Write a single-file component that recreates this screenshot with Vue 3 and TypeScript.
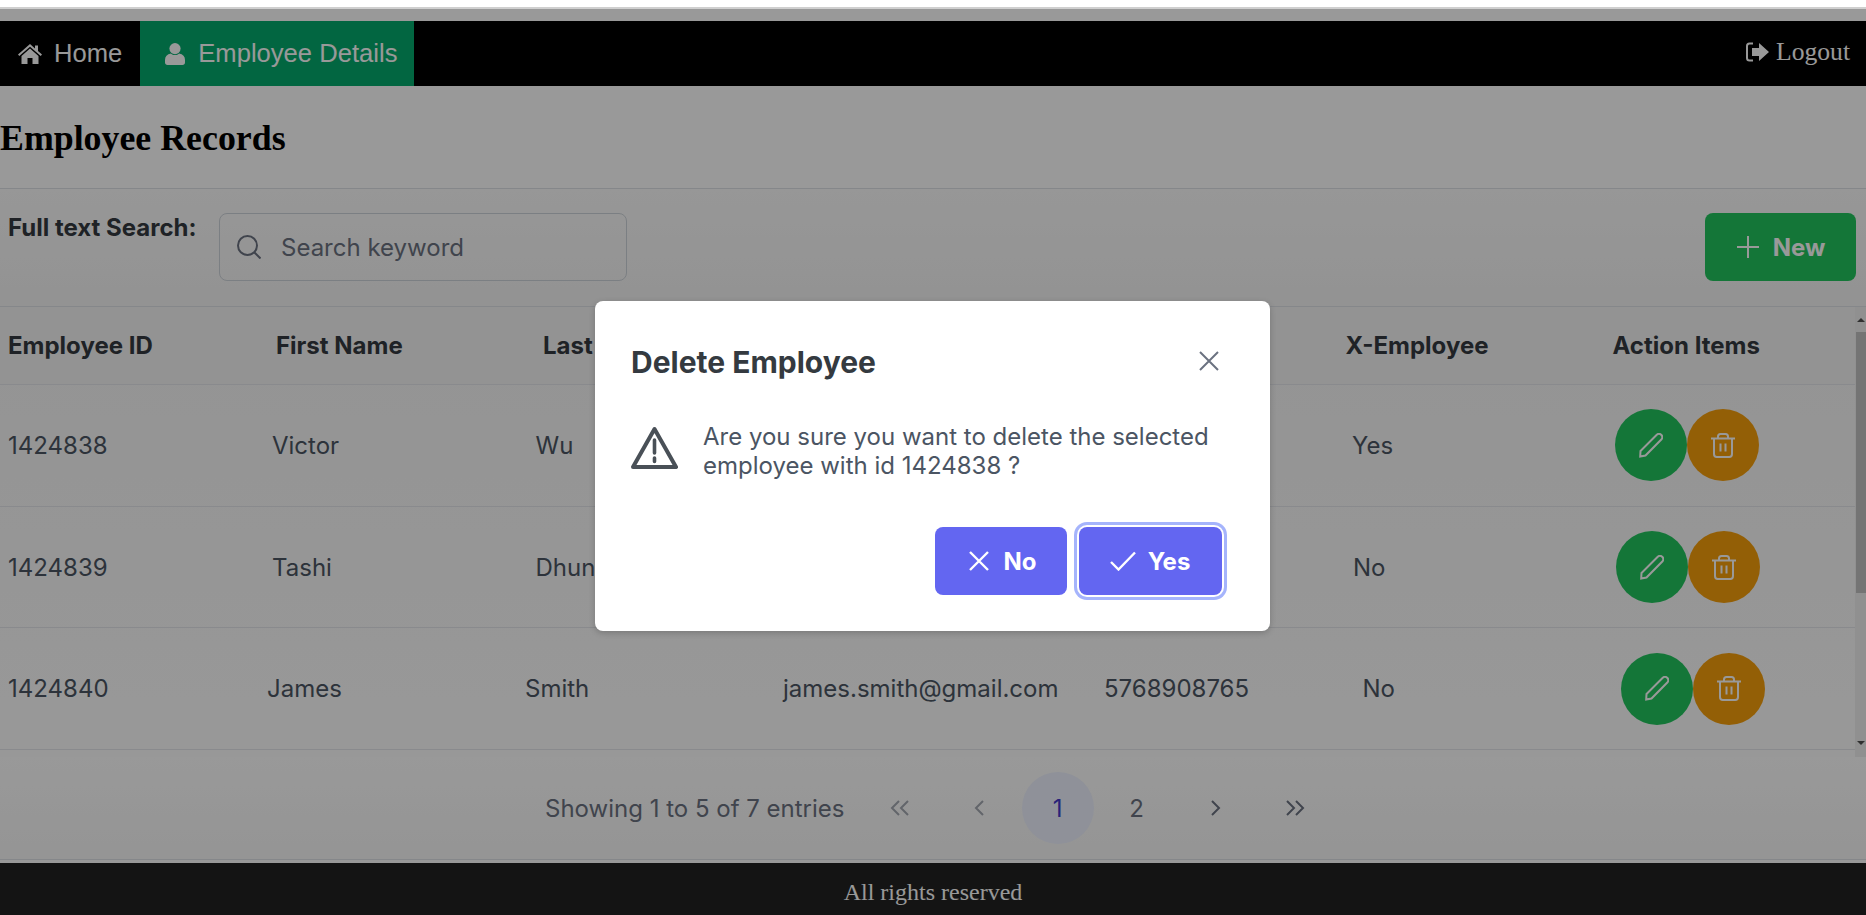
<script setup lang="ts">
interface Employee {
  id: number
  first: string
  last: string
  email: string
  phone: string
  exEmployee: string
  cols: string
}

// the rows don't share column widths in the original, each one has its own
const headerCols = '268px 267px 802.500px 267px 1fr'

const employees: Employee[] = [
  { id: 1424838, first: 'Victor', last: 'Wu', email: '', phone: '', exEmployee: 'Yes', cols: '264px 263.500px 270px 298px 248.500px 263px 1fr' },
  { id: 1424839, first: 'Tashi', last: 'Dhun', email: '', phone: '', exEmployee: 'No', cols: '264px 263.500px 270px 298px 249.500px 263px 1fr' },
  { id: 1424840, first: 'James', last: 'Smith', email: 'james.smith@gmail.com', phone: '5768908765', exEmployee: 'No', cols: '259px 258px 258px 321px 258.500px 258.500px 1fr' }
]

const pages = [1, 2]
</script>

<template>
  <div class="strip"></div>

  <nav class="topnav">
    <a class="nav-link">
      <svg class="home-icon" viewBox="0 0 24 20"><path d="M12 0 17 4.400V1.500H20V7L24 10.500 22.700 12 12 2.800 1.300 12 0 10.500Z" /><path d="M12 4.600 20.500 12V20H14.500V14H9.500V20H3.500V12Z" /></svg>
      Home
    </a>
    <a class="nav-link active">
      <svg class="user-icon" viewBox="0 0 20 22"><circle cx="10" cy="5.600" r="5.600" /><path d="M6 10.500C8 12.500 12 12.500 14 10.500 18 11.200 20 13.500 20 17V19.500C20 21 19 22 17.500 22H2.500C1 22 0 21 0 19.500V17C0 13.500 2 11.200 6 10.500Z" /></svg>
      Employee Details
    </a>
    <a class="logout">
      <svg class="logout-icon" viewBox="0 0 23 20"><path d="M7 1.500H3.500C2 1.500 1 2.500 1 4V16C1 17.500 2 18.500 3.500 18.500H7" fill="none" stroke="currentColor" stroke-width="2" /><path d="M6 6H13V1L23 10 13 19V14H6Z" /></svg>
      Logout
    </a>
  </nav>

  <h2 class="page-title">Employee Records</h2>

  <section class="toolbar">
    <label class="search-label">Full text Search:</label>
    <div class="search-box">
      <svg class="search-icon" viewBox="0 0 24 24"><circle cx="10.500" cy="10.500" r="9.500" /><path d="M17.500 17.500 23.500 23.500" /></svg>
      <span class="placeholder">Search keyword</span>
    </div>
    <button class="new-btn">
      <svg class="plus-icon" viewBox="0 0 24 24"><path d="M12 1V23M1 12H23" /></svg>
      New
    </button>
  </section>

  <section class="table-area">
    <div class="table-body">
      <div class="row head" :style="{ gridTemplateColumns: headerCols }">
        <span>Employee ID</span>
        <span>First Name</span>
        <span>Last</span>
        <span>X-Employee</span>
        <span>Action Items</span>
      </div>
      <div v-for="emp in employees" :key="emp.id" class="row" :style="{ gridTemplateColumns: emp.cols }">
        <span>{{ emp.id }}</span>
        <span>{{ emp.first }}</span>
        <span>{{ emp.last }}</span>
        <span>{{ emp.email }}</span>
        <span>{{ emp.phone }}</span>
        <span>{{ emp.exEmployee }}</span>
        <div class="actions">
          <button class="round edit">
            <svg viewBox="0 0 24 25"><path d="M1.500 18 17.500 2C19 .6 21 .6 22.400 2 23.600 3.300 23.600 5 22.300 6.500L6.500 22.500 1.200 23.500Z" /></svg>
          </button>
          <button class="round del">
            <svg viewBox="0 0 24 25"><path d="M0 5.500H24M7 5.500V3.500C7 2 8 1 9.500 1H14.500C16 1 17 2 17 3.500V5.500M3 5.500V21C3 22.800 4 24 5.800 24H18.200C20 24 21 22.800 21 21V5.500M9.500 10.500V18.500M14.500 10.500V18.500" /></svg>
          </button>
        </div>
      </div>
    </div>
    <div class="scrollbar">
      <i class="arrow up"></i>
      <div class="thumb"></div>
      <i class="arrow down"></i>
    </div>
  </section>

  <section class="pager">
    <span class="entries">Showing 1 to 5 of 7 entries</span>
    <span class="page-btn muted">
      <svg viewBox="0 0 20 16"><path d="M9 1 2 8 9 15M18 1 11 8 18 15" /></svg>
    </span>
    <span class="page-btn muted">
      <svg viewBox="0 0 20 16"><path d="M14 1 7 8 14 15" /></svg>
    </span>
    <span v-for="p in pages" :key="p" class="page-btn" :class="{ current: p === 1 }">{{ p }}</span>
    <span class="page-btn">
      <svg viewBox="0 0 20 16"><path d="M6 1 13 8 6 15" /></svg>
    </span>
    <span class="page-btn">
      <svg viewBox="0 0 20 16"><path d="M2 1 9 8 2 15M11 1 18 8 11 15" /></svg>
    </span>
  </section>

  <footer class="footer">All rights reserved</footer>

  <!-- dialog de confirmation -->
  <div class="mask">
    <div class="dialog">
      <div class="dialog-head">
        <span class="dialog-title">Delete Employee</span>
        <svg class="close-icon" viewBox="0 0 20 20"><path d="M1 1 19 19M19 1 1 19" /></svg>
      </div>
      <div class="dialog-body">
        <svg class="warn-icon" viewBox="0 0 47 43">
          <path d="M23.500 3 45 41H2Z" fill="none" stroke-width="4" stroke-linejoin="round" />
          <path d="M23.500 14V27M23.500 32V35.500" fill="none" stroke-width="3.600" stroke-linecap="round" />
        </svg>
        <p>Are you sure you want to delete the selected employee with id 1424838 ?</p>
      </div>
      <div class="dialog-foot">
        <button class="confirm">
          <svg viewBox="0 0 20 20"><path d="M1 1 19 19M19 1 1 19" /></svg>
          No
        </button>
        <button class="confirm focused">
          <svg viewBox="0 0 26 20"><path d="M1 11 8.500 18.500 25 1.500" /></svg>
          Yes
        </button>
      </div>
    </div>
  </div>
</template>

<style scoped>
.strip {
  height: 7px;
  background: #fff;
  border-bottom: 2px solid #cfcfcf;
  margin-bottom: 12px;
}

/* barre du haut */
.topnav {
  display: flex;
  align-items: stretch;
  height: 65px;
  background: #000;
  font-family: "Liberation Sans", Arial, sans-serif;
  font-size: 25.6px;
  color: #fff;
}

.nav-link {
  display: flex;
  align-items: center;
  padding: 0 18px;
}

.nav-link.active {
  background: #04aa6d;
  padding: 0 17px 0 25px;
}

.home-icon {
  width: 24px;
  height: 20px;
  margin-right: 12px;
  fill: #fff;
}

.user-icon {
  width: 20px;
  height: 22px;
  margin-right: 13px;
  fill: #fff;
}

.logout {
  margin-left: auto;
  display: flex;
  align-items: center;
  padding: 0 16px 4px 0;
  font-family: "Liberation Serif", "Times New Roman", serif;
}

.logout-icon {
  width: 23px;
  height: 20px;
  margin-right: 7px;
  fill: #fff;
}

.page-title {
  margin: 0;
  box-sizing: border-box;
  padding-top: 1px;
  height: 103px;
  display: flex;
  align-items: center;
  font-family: "Liberation Serif", "Times New Roman", serif;
  font-size: 35.840px;
  font-weight: 700;
  color: #000;
  border-bottom: 1px solid #dee2e6;
}

.toolbar,
.table-area,
.pager,
.dialog {
  font-family: Inter, "Noto Sans", sans-serif;
  font-size: 24px;
}

.toolbar {
  display: flex;
  align-items: flex-start;
  padding: 24px 10px 24px 8px;
  height: 69px;
  background: linear-gradient(#fcfcfc, #f5f5f5);
  border-bottom: 1px solid #dee2e6;
}

.search-label {
  width: 211px;
  font-weight: 700;
  color: #343a40;
  line-height: 30px;
}

.search-box {
  width: 408px;
  height: 68px;
  box-sizing: border-box;
  display: flex;
  align-items: center;
  padding-left: 17px;
  border: 1px solid #ced4da;
  border-radius: 8px;
}

.search-icon {
  width: 24px;
  height: 24px;
  margin-right: 20px;
  fill: none;
  stroke: #6b7280;
  stroke-width: 2;
}

.placeholder {
  color: #6b7280;
}

.new-btn {
  margin-left: auto;
  width: 151px;
  height: 68px;
  display: flex;
  align-items: center;
  justify-content: center;
  gap: 13px;
  border: 0;
  border-radius: 8px;
  background: #22c55e;
  color: #fff;
  font: 700 24px Inter, sans-serif;
}

.plus-icon {
  width: 24px;
  height: 24px;
  fill: none;
  stroke: #fff;
  stroke-width: 2;
}

.table-area {
  display: flex;
  height: 450px;
  overflow: hidden;
  background: linear-gradient(#f6f6f6, #fefefe);
}

.table-body {
  flex: 1;
  min-width: 0;
}

.row {
  display: grid;
  align-items: center;
  height: 121.700px;
  box-sizing: border-box;
  padding-left: 8px;
  color: #4b5563;
  border-bottom: 1px solid #e5e7eb;
  white-space: nowrap;
}

.row.head {
  height: 78px;
  font-weight: 700;
  color: #343a40;
  background: #f5f5f5;
}

.actions {
  display: flex;
}

.round {
  width: 72px;
  height: 72px;
  padding: 0;
  border: 0;
  border-radius: 50%;
  display: flex;
  align-items: center;
  justify-content: center;
}

.round svg {
  width: 24px;
  height: 25px;
  fill: none;
  stroke: #fff;
  stroke-width: 2;
}

.round.edit {
  background: #22c55e;
}

.round.del {
  background: #f59e0b;
}

.scrollbar {
  width: 11px;
  background: #f1f1f1;
  position: relative;
}

.thumb {
  position: absolute;
  top: 25px;
  left: 1px;
  right: 0;
  height: 261px;
  background: #c1c1c1;
}

.arrow {
  position: absolute;
  left: 2px;
  width: 0;
  height: 0;
  border-left: 4px solid transparent;
  border-right: 4px solid transparent;
}

.arrow.up {
  top: 11px;
  border-bottom: 4px solid #505050;
}

.arrow.down {
  bottom: 12px;
  border-top: 4px solid #505050;
}

.pager {
  height: 103px;
  box-sizing: border-box;
  display: flex;
  align-items: center;
  justify-content: center;
  padding-left: 13px;
  color: #6b7280;
  background: linear-gradient(#fff, #f8f8f8);
  border-bottom: 1px solid #dee2e6;
}

.entries {
  margin-right: 15.500px;
}

.page-btn {
  width: 72px;
  height: 72px;
  margin: 0 3.500px;
  border-radius: 50%;
  display: flex;
  align-items: center;
  justify-content: center;
  color: #6b7280;
}

.page-btn svg {
  width: 20px;
  height: 16px;
  fill: none;
  stroke: #6b7280;
  stroke-width: 2;
}

.page-btn.muted svg {
  opacity: 0.6;
}

.page-btn.current {
  background: #eef2ff;
  color: #4338ca;
}

.footer {
  height: 52px;
  box-sizing: border-box;
  padding: 6px 0 0 0;
  margin-top: 3px;
  background: #222;
  color: #fff;
  display: flex;
  align-items: center;
  justify-content: center;
  font-family: "Liberation Serif", "Times New Roman", serif;
  font-size: 24px;
}

/* la modale passe au-dessus de toute la page */
.mask {
  position: absolute;
  top: 9px;
  left: 0;
  right: 0;
  height: 906px;
  box-sizing: border-box;
  padding-top: 8px;
  display: flex;
  align-items: center;
  justify-content: center;
  background: rgba(0, 0, 0, 0.4);
}

.dialog {
  width: 675px;
  height: 330px;
  box-sizing: border-box;
  padding: 0 36px;
  margin-right: 1px;
  background: #fff;
  border-radius: 8px;
  box-shadow: 0 2px 6px rgba(0, 0, 0, 0.2);
  display: flex;
  flex-direction: column;
}

.dialog-head {
  display: flex;
  align-items: center;
  justify-content: space-between;
  height: 122px;
  padding-right: 15px;
}

.dialog-title {
  font-size: 30px;
  font-weight: 700;
  color: #343a40;
}

.close-icon {
  width: 20px;
  height: 20px;
  margin-bottom: 2px;
  fill: none;
  stroke: #6b7280;
  stroke-width: 2;
}

.dialog-body {
  display: flex;
  align-items: center;
  gap: 25px;
  height: 80px;
  margin-top: -15px;
}

.warn-icon {
  width: 47px;
  height: 43px;
  flex: none;
  margin-top: -2px;
  stroke: #495057;
}

.dialog-body p {
  margin: 0;
  padding-top: 6px;
  font-size: 24px;
  line-height: 29px;
  color: #4b5563;
}

.dialog-foot {
  display: flex;
  justify-content: flex-end;
  gap: 12px;
  margin-top: 39px;
  padding-right: 12px;
}

.confirm {
  height: 68px;
  width: 132px;
  padding: 0 0 0 4px;
  display: flex;
  align-items: center;
  justify-content: center;
  gap: 14px;
  border: 0;
  border-radius: 8px;
  background: #6366f1;
  color: #fff;
  font: 700 24px Inter, sans-serif;
}

.confirm svg {
  width: 20px;
  height: 20px;
  fill: none;
  stroke: #fff;
  stroke-width: 2.400;
}

.confirm.focused {
  width: 143px;
  padding: 0 1px 0 0;
  gap: 12px;
  box-shadow: 0 0 0 2px #fff, 0 0 0 5px #a5b4fc;
}

.confirm.focused svg {
  width: 26px;
}
</style>

<style>
body {
  background: #fff;
}
</style>
